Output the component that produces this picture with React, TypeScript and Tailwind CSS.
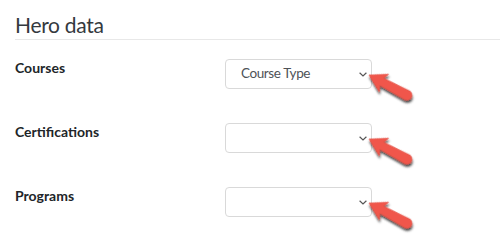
import React from "react";

function Arrow({ id }: { id: string }) {
  return (
    <svg
      className="absolute pointer-events-none overflow-visible"
      style={{ left: 140, top: 12 }}
      width={60}
      height={40}
      viewBox="0 0 60 40"
    >
      <defs>
        <filter id={id} x="-30%" y="-30%" width="160%" height="160%">
          <feDropShadow dx="1.5" dy="2" stdDeviation="1.2" floodColor="#000" floodOpacity="0.75" />
        </filter>
      </defs>
      <g transform="translate(4,4) rotate(28)" filter={`url(#${id})`}>
        <path
          d="M0,0 L17,-10 L14.5,-4 L43,-5 A5,5 0 0 1 43,5 L14.5,4 L17,10 Z"
          fill="#f0574b"
          stroke="#e04a3e"
          strokeWidth="0.6"
          strokeLinejoin="round"
        />
      </g>
    </svg>
  );
}

function Select({ text, id }: { text?: string; id: string }) {
  return (
    <div className="relative mt-[2px]">
      <div className="w-[147px] h-[30px] border border-[#d9d9d9] rounded-[4px] bg-white flex items-center pl-[15px] pr-[4px]">
        <span className="flex-1 text-[13.5px] tracking-[-0.4px] text-[#4e5257] leading-none">{text ?? ""}</span>
        <svg width="8" height="5" viewBox="0 0 8 5" className="mt-[1px]">
          <path d="M0.6,0.8 L4,4 L7.4,0.8" fill="none" stroke="#555" strokeWidth="1.2" />
        </svg>
      </div>
      <Arrow id={id} />
    </div>
  );
}

function Row({ label, text, id }: { label: string; text?: string; id: string }) {
  return (
    <div className="flex items-start h-[64px]">
      <div className="w-[210px] text-[14px] leading-[21px] font-bold text-[#212529]">{label}</div>
      <Select text={text} id={id} />
    </div>
  );
}

export default function App() {
  return (
    <div
      className="w-[500px] h-[240px] bg-white overflow-hidden pl-[15px]"
      style={{ fontFamily: 'Lato, "Open Sans", sans-serif' }}
    >
      <h2 className="pt-[13px] text-[21px] leading-[24px] tracking-[-0.3px] font-normal text-[#34393e]">Hero data</h2>
      <div className="mt-[2px] border-b border-[#e8e8e8]" />
      <div className="mt-[17px]">
        <Row label="Courses" text="Course Type" id="s1" />
        <Row label="Certifications" id="s2" />
        <Row label="Programs" id="s3" />
      </div>
    </div>
  );
}
